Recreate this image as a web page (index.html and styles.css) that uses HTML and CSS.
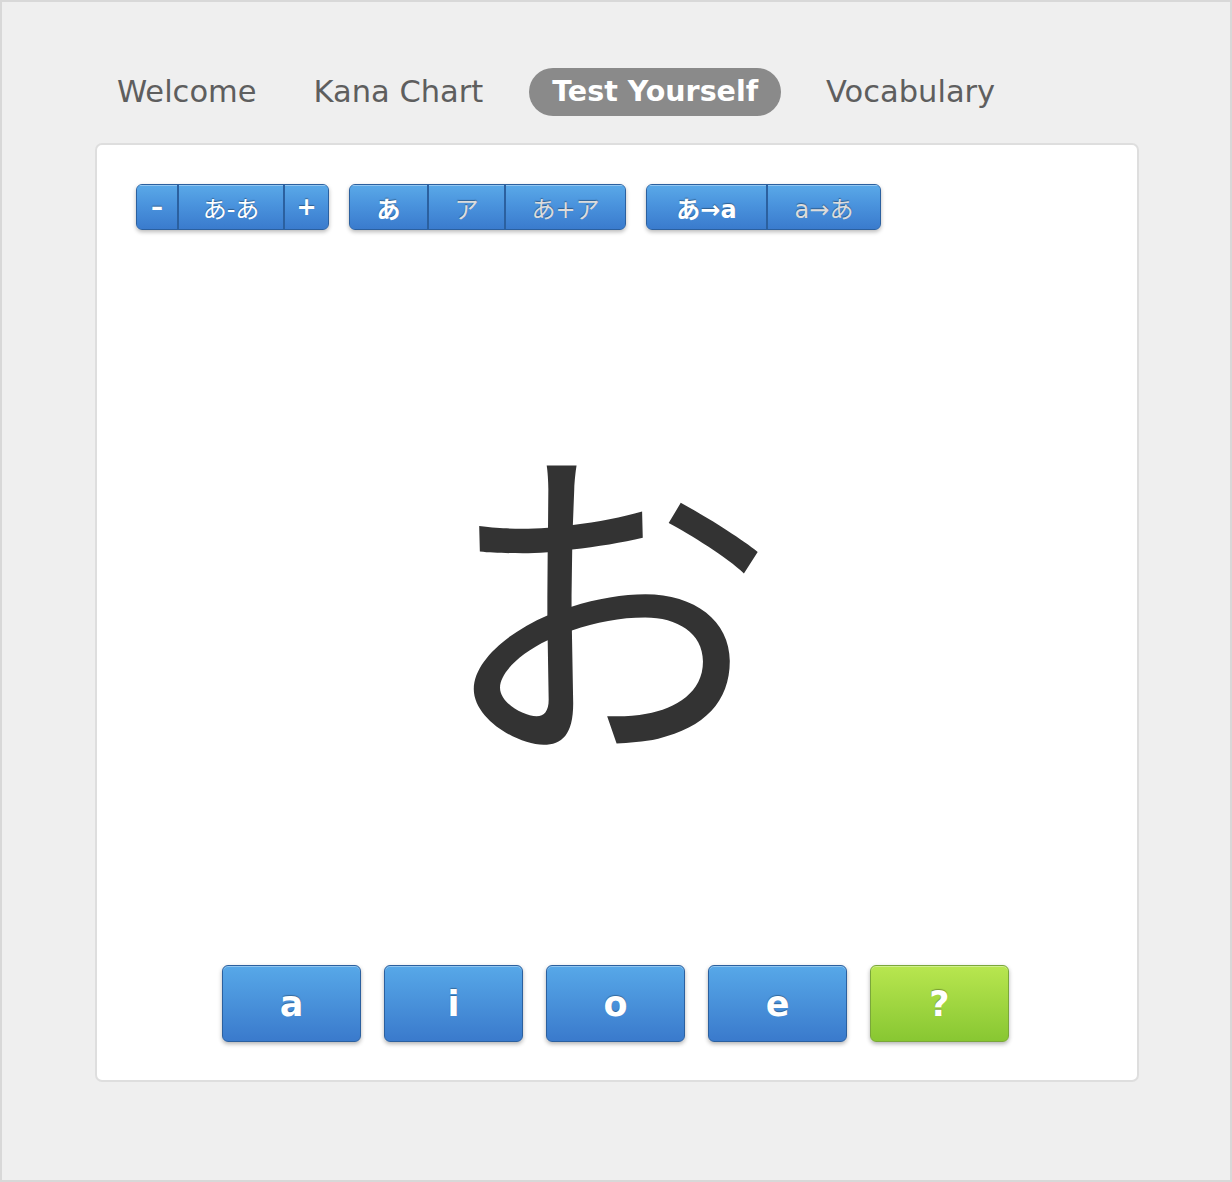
FILE: index.html
```html
<!DOCTYPE html>
<html lang="ja">
<head>
<meta charset="utf-8">
<title>Kana</title>
<link rel="stylesheet" href="styles.css">
</head>
<body>
<div class="page">
  <nav class="tabs">
    <a class="tab t-welcome">Welcome</a>
    <a class="tab t-chart">Kana Chart</a>
    <a class="tab active">Test Yourself</a>
    <a class="tab">Vocabulary</a>
  </nav>
  <main class="card">
    <div class="toolbar">
      <div class="group">
        <button class="seg s-minus on">–</button>
        <button class="seg s-range on light">あ-あ</button>
        <button class="seg s-plus on">+</button>
      </div>
      <div class="group">
        <button class="seg s-one on">あ</button>
        <button class="seg s-one off">ア</button>
        <button class="seg s-wide off">あ+ア</button>
      </div>
      <div class="group">
        <button class="seg s-dir on">あ→a</button>
        <button class="seg s-dir2 off">a→あ</button>
      </div>
    </div>
    <div class="stage">
      <div class="kana">お</div>
    </div>
    <div class="answers">
      <button class="answer">a</button>
      <button class="answer">i</button>
      <button class="answer">o</button>
      <button class="answer">e</button>
      <button class="answer help">?</button>
    </div>
  </main>
</div>
</body>
</html>
```

FILE: styles.css
```css
* { box-sizing: border-box; }
html, body { margin: 0; padding: 0; }
body {
  width: 1232px;
  height: 1182px;
  font-family: "DejaVu Sans", "Noto Sans CJK JP", sans-serif;
}
.page {
  width: 1232px;
  height: 1182px;
  background: #efefef;
  border: 2px solid #d8d8d8;
  padding: 66px 0 0 92px;
  display: flex;
  flex-direction: column;
}
.tabs {
  display: flex;
  height: 48px;
  align-items: center;
}
.tab {
  font-size: 30.5px;
  color: #5e5e5e;
  padding: 0 23px;
  height: 48px;
  line-height: 48px;
  border-radius: 24px;
  margin-right: 22px;
  white-space: nowrap;
}
.tab.t-welcome { margin-right: 11px; }
.tab.t-chart { margin-right: 23px; }
.tab.active {
  background: #8a8a8a;
  color: #fff;
  font-weight: bold;
  font-size: 28.5px;
}
.card {
  margin-top: 27px;
  margin-left: 1px;
  width: 1044px;
  height: 939px;
  background: #fff;
  border: 2px solid #dedede;
  border-radius: 7px;
  padding: 39px 39px 38px 39px;
  display: flex;
  flex-direction: column;
}
.toolbar {
  display: flex;
  gap: 20px;
  height: 46px;
}
.group {
  display: flex;
  height: 46px;
  border: 1px solid #2b609f;
  border-radius: 6px;
  overflow: hidden;
  box-shadow: 0 2px 4px rgba(0,0,0,0.28);
  background: linear-gradient(#5aa9e8, #3a7bcd);
}
.seg {
  font-family: "DejaVu Sans", "Noto Sans CJK JP", sans-serif;
  font-size: 24px;
  border: none;
  border-left: 2px solid #2b609f;
  background: linear-gradient(#5aa9e8 0%, #4a93dd 45%, #3a7bcd 100%);
  box-shadow: inset 0 1px 0 rgba(255,255,255,0.35);
  color: #fff;
  padding: 0;
  height: 100%;
  text-align: center;
  text-shadow: 0 -1px 1px rgba(0,0,0,0.35);
  white-space: nowrap;
}
.seg:first-child { border-left: none; }
.s-minus { width: 40px; font-weight: bold; }
.s-range { width: 106px; }
.s-plus { width: 45px; font-weight: bold; }
.s-one { width: 77px; }
.s-wide { width: 121px; }
.s-dir { width: 119px; }
.s-dir2 { width: 114px; }
.seg.on { font-weight: bold; color: #fff; }
.seg.on.light { font-weight: normal; }
.seg.off { color: #dcdcdc; font-weight: normal; }
.stage {
  flex: 1;
  display: flex;
  align-items: center;
  justify-content: center;
}
.kana {
  font-family: "Noto Sans CJK JP", sans-serif;
  font-size: 336px;
  line-height: 1;
  color: #333;
  margin-right: 21px;
  margin-bottom: 18px;
}
.answers {
  display: flex;
  justify-content: center;
  gap: 23px;
  height: 78px;
  padding-right: 3px;
}
.answer {
  width: 139px;
  height: 77px;
  margin-top: 1px;
  border: 1px solid #2b609f;
  border-radius: 6px;
  background: linear-gradient(#57a8e8, #3a7acc);
  box-shadow: inset 0 1px 0 rgba(255,255,255,0.35), 0 2px 4px rgba(0,0,0,0.3);
  color: #fff;
  font-family: "DejaVu Sans", sans-serif;
  font-weight: bold;
  font-size: 35px;
  text-shadow: 0 -1px 1px rgba(0,0,0,0.3);
  padding: 0;
}
.answer.help {
  background: linear-gradient(#b8e64f, #88c732);
  border-color: #7aa73a;
}
```
